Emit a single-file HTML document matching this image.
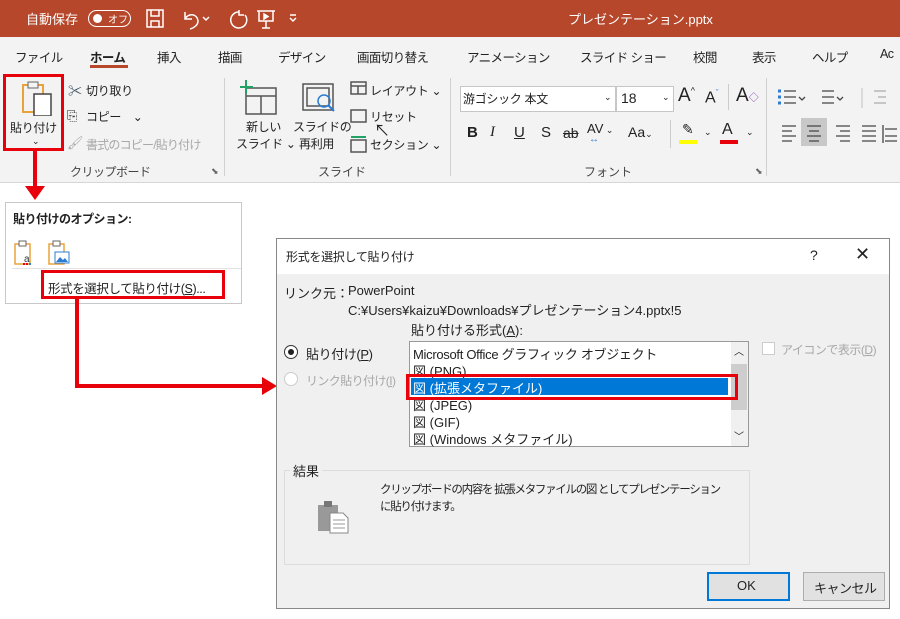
<!DOCTYPE html>
<html><head><meta charset="utf-8"><style>
*{margin:0;padding:0;box-sizing:border-box}
body{width:900px;height:619px;position:relative;background:#fff;overflow:hidden;font-family:"Liberation Sans","Noto Sans CJK JP",sans-serif;font-size:13px;color:#222}
.a{position:absolute;white-space:nowrap}
.g{color:#a8a8a8}
.t{top:47px;font-size:12.5px;letter-spacing:-0.6px}
.r{font-size:12px;letter-spacing:-0.3px}
</style></head><body>
<!-- title bar -->
<div class="a" style="left:0;top:0;width:900px;height:37px;background:#b7472a"></div>
<div class="a" style="left:26px;top:9px;color:#fff;font-size:13px">自動保存</div>
<div class="a" style="left:88px;top:10px;width:43px;height:17px;border:1.5px solid #fff;border-radius:9px"></div>
<div class="a" style="left:93px;top:14px;width:9px;height:9px;background:#fff;border-radius:50%"></div>
<div class="a" style="left:108px;top:11px;color:#fff;font-size:10px">オフ</div>
<svg class="a" style="left:145px;top:8px" width="160" height="22" fill="none" stroke="#fff" stroke-width="1.5">
<rect x="2" y="2" width="16" height="17"/><path d="M6 2v6h8V2M6 19v-6h8v6"/>
<path d="M40 4v7h7M40 11c3-6 12-6 13 2c0 4-4 7-8 8"/><path d="M58 9l3 3 3-3"/>
<path d="M94 4a8 8 0 1 0 6 3M94 2v5h5"/>
<path d="M112 3h18M114 3v10h14V3M121 13v7M117 20h8"/><path d="M119 6l4 2.5-4 2.5z" fill="#fff"/>
<path d="M145 10l3 3 3-3M145 7h6"/>
</svg>
<div class="a" style="left:568px;top:9px;color:#fff;font-size:13px">プレゼンテーション.pptx</div>
<!-- tabs & ribbon -->
<div class="a" style="left:0;top:37px;width:900px;height:146px;background:#f3f3f3;border-bottom:1px solid #d6d6d6"></div>
<div class="a t" style="left:15px">ファイル</div>
<div class="a t" style="left:90px;font-weight:bold">ホーム</div>
<div class="a" style="left:90px;top:65px;width:38px;height:3px;background:#b7472a"></div>
<div class="a t" style="left:157px">挿入</div>
<div class="a t" style="left:218px">描画</div>
<div class="a t" style="left:278px">デザイン</div>
<div class="a t" style="left:357px">画面切り替え</div>
<div class="a t" style="left:467px">アニメーション</div>
<div class="a t" style="left:580px">スライド ショー</div>
<div class="a t" style="left:693px">校閲</div>
<div class="a t" style="left:752px">表示</div>
<div class="a t" style="left:812px">ヘルプ</div>
<div class="a t" style="left:880px">Ac</div>
<!-- clipboard group -->
<svg class="a" style="left:20px;top:80px" width="36" height="36" fill="none">
<rect x="3" y="5" width="20" height="27" stroke="#e8a33d" stroke-width="2"/><rect x="8" y="2" width="10" height="6" fill="#f3f3f3" stroke="#666"/>
<rect x="14" y="14" width="17" height="22" fill="#fff" stroke="#444" stroke-width="1.5"/></svg>
<div class="a r" style="left:10px;top:119px">貼り付け</div>
<div class="a" style="left:32px;top:136px;font-size:9px">⌄</div>
<div class="a" style="left:3px;top:74px;width:61px;height:77px;border:3px solid #e8000b"></div>
<div class="a" style="left:68px;top:81px;font-size:14px;color:#456">✂</div>
<div class="a r" style="left:86px;top:82px">切り取り</div>
<div class="a" style="left:67px;top:108px;font-size:13px">⎘</div>
<div class="a r" style="left:86px;top:108px">コピー　⌄</div>
<div class="a g" style="left:67px;top:135px;font-size:13px">🖌</div>
<div class="a g r" style="left:86px;top:136px;letter-spacing:-0.8px">書式のコピー/貼り付け</div>
<div class="a" style="left:70px;top:163px;font-size:12px;color:#444;letter-spacing:-0.5px">クリップボード</div>
<div class="a" style="left:211px;top:166px;font-size:9px;color:#666">⬊</div>
<div class="a" style="left:224px;top:78px;width:1px;height:98px;background:#d0d0d0"></div>
<!-- slides group -->
<svg class="a" style="left:240px;top:80px" width="200" height="75" fill="none" stroke="#555" stroke-width="1.5">
<rect x="6" y="8" width="30" height="26"/><path d="M6 16h30M21 16v18"/><path d="M6 0v14M0 7h13" stroke="#21a366" stroke-width="2"/>
<rect x="63" y="4" width="30" height="26"/><rect x="67" y="8" width="22" height="18"/><circle cx="84" cy="21" r="6" stroke="#2b7cd3"/><path d="M88 25l6 6" stroke="#2b7cd3" stroke-width="2"/>
<rect x="111" y="2" width="15" height="12"/><path d="M111 6h15M118 6v8"/>
<rect x="111" y="30" width="15" height="12"/>
<rect x="111" y="60" width="15" height="12"/><path d="M111 57h15" stroke="#21a366" stroke-width="2"/>
</svg>
<div class="a r" style="left:370px;top:82px">レイアウト ⌄</div>
<div class="a r" style="left:370px;top:108px">リセット</div>
<div class="a" style="left:374px;top:117px;font-size:16px">↖</div>
<div class="a r" style="left:370px;top:136px">セクション ⌄</div>
<div class="a r" style="left:246px;top:118px">新しい</div>
<div class="a r" style="left:236px;top:135px">スライド ⌄</div>
<div class="a r" style="left:293px;top:118px">スライドの</div>
<div class="a r" style="left:299px;top:135px">再利用</div>
<div class="a" style="left:318px;top:163px;font-size:12px;color:#444">スライド</div>
<div class="a" style="left:450px;top:78px;width:1px;height:98px;background:#d0d0d0"></div>
<!-- font group -->
<div class="a" style="left:460px;top:86px;width:156px;height:26px;background:#fff;border:1px solid #c6c6c6"></div>
<div class="a r" style="left:463px;top:90px">游ゴシック 本文</div>
<div class="a" style="left:604px;top:92px;font-size:9px">⌄</div>
<div class="a" style="left:616px;top:86px;width:58px;height:26px;background:#fff;border:1px solid #c6c6c6"></div>
<div class="a" style="left:621px;top:90px;font-size:14px">18</div>
<div class="a" style="left:662px;top:92px;font-size:9px">⌄</div>
<div class="a" style="left:678px;top:85px;font-size:19px">A<sup style="font-size:9px">^</sup></div>
<div class="a" style="left:705px;top:88px;font-size:16px">A<sup style="font-size:9px;color:#2b7cd3">ˇ</sup></div>
<div class="a" style="left:728px;top:84px;width:1px;height:26px;background:#ccc"></div>
<div class="a" style="left:736px;top:85px;font-size:19px">A<span style="font-size:10px;color:#8a3ab9">◇</span></div>
<div class="a" style="left:467px;top:124px;font-size:15px;font-weight:bold">B</div>
<div class="a" style="left:490px;top:124px;font-size:15px;font-style:italic;font-family:'Liberation Serif'">I</div>
<div class="a" style="left:514px;top:124px;font-size:15px;text-decoration:underline">U</div>
<div class="a" style="left:541px;top:124px;font-size:15px">S</div>
<div class="a" style="left:563px;top:125px;font-size:14px;text-decoration:line-through">ab</div>
<div class="a" style="left:587px;top:121px;font-size:13px">AV<span style="font-size:9px"> ⌄</span></div>
<div class="a" style="left:589px;top:134px;font-size:10px;color:#2b7cd3">↔</div>
<div class="a" style="left:628px;top:124px;font-size:14px">Aa<span style="font-size:9px">⌄</span></div>
<div class="a" style="left:670px;top:120px;width:1px;height:28px;background:#ccc"></div>
<div class="a" style="left:682px;top:121px;font-size:14px">✎</div>
<div class="a" style="left:679px;top:140px;width:18px;height:4px;background:#ffff00"></div>
<div class="a" style="left:704px;top:127px;font-size:9px">⌄</div>
<div class="a" style="left:722px;top:121px;font-size:16px">A</div>
<div class="a" style="left:720px;top:140px;width:18px;height:4px;background:#e8000b"></div>
<div class="a" style="left:746px;top:127px;font-size:9px">⌄</div>
<div class="a" style="left:584px;top:163px;font-size:12px;color:#444">フォント</div>
<div class="a" style="left:755px;top:166px;font-size:9px;color:#666">⬊</div>
<div class="a" style="left:766px;top:78px;width:1px;height:98px;background:#d0d0d0"></div>
<!-- paragraph -->
<svg class="a" style="left:778px;top:88px" width="122" height="60" fill="none" stroke="#444" stroke-width="1.3">
<path d="M6 3h12M6 9h12M6 15h12"/><path d="M0 3h3M0 9h3M0 15h3" stroke="#2b7cd3" stroke-width="3"/>
<path d="M21 9l3 3 3-3"/><path d="M44 3h12M44 9h12M44 15h12M59 9l3 3 3-3"/>
<path d="M84 0v20" stroke="#ccc"/><path d="M96 3h12M100 9h8M96 15h12" stroke="#aaa"/>
<rect x="23" y="30" width="26" height="28" fill="#c8c8c8" stroke="none"/>
<path d="M4 38h14M4 43h10M4 48h14M4 53h10M29 38h14M31 43h10M29 48h14M31 53h10M58 38h14M62 43h10M58 48h14M62 53h10M84 38h14M84 43h14M84 48h14M84 53h14M105 37v18M107 41h12M107 48h12M107 53h12"/>
</svg>
<!-- arrow down -->
<div class="a" style="left:33px;top:151px;width:4px;height:38px;background:#e8000b"></div>
<svg class="a" style="left:25px;top:186px" width="20" height="16"><path d="M0 0h20L10 14z" fill="#e8000b"/></svg>
<!-- paste options panel -->
<div class="a" style="left:5px;top:202px;width:237px;height:102px;border:1px solid #c8c8c8;background:#fff"></div>
<div class="a" style="left:13px;top:210px;font-size:12px;font-weight:bold;letter-spacing:-0.5px">貼り付けのオプション:</div>
<svg class="a" style="left:13px;top:240px" width="60" height="26" fill="none">
<rect x="2" y="4" width="15" height="20" stroke="#e8a33d" stroke-width="1.5"/><rect x="6" y="1" width="7" height="5" fill="#fff" stroke="#666"/>
<text x="11" y="22" font-size="10" fill="#333" stroke="none" font-family="Liberation Sans">a</text>
<path d="M10 24h2M13 24h2" stroke="#e8000b" stroke-width="2"/><path d="M16 24h2" stroke="#2b7cd3" stroke-width="2"/>
<rect x="36" y="4" width="15" height="20" stroke="#e8a33d" stroke-width="1.5"/><rect x="40" y="1" width="7" height="5" fill="#fff" stroke="#666"/>
<rect x="42" y="12" width="14" height="11" fill="#fff" stroke="#2b7cd3"/><path d="M43 22l4-5 3 3 2-2 3 4z" fill="#2b7cd3"/>
</svg>
<div class="a" style="left:12px;top:268px;width:229px;height:1px;background:#e2e2e2"></div>
<div class="a" style="left:48px;top:278px;font-size:12.5px;letter-spacing:-0.4px">形式を選択して貼り付け(<u>S</u>)...</div>
<div class="a" style="left:41px;top:270px;width:184px;height:29px;border:3px solid #e8000b"></div>
<!-- red connector -->
<div class="a" style="left:75px;top:298px;width:4px;height:90px;background:#e8000b"></div>
<div class="a" style="left:75px;top:384px;width:190px;height:4px;background:#e8000b"></div>
<svg class="a" style="left:262px;top:377px" width="16" height="18"><path d="M0 0L15 9L0 18z" fill="#e8000b"/></svg>
<!-- dialog -->
<div class="a" style="left:276px;top:238px;width:614px;height:371px;background:#f0f0f0;border:1px solid #888"></div>
<div class="a" style="left:277px;top:239px;width:612px;height:35px;background:#fff"></div>
<div class="a" style="left:286px;top:248px;font-size:12px;letter-spacing:-0.3px">形式を選択して貼り付け</div>
<div class="a" style="left:810px;top:247px;font-size:14px">?</div>
<div class="a" style="left:855px;top:244px;font-size:18px;font-weight:300">✕</div>
<div class="a" style="left:284px;top:283px;font-size:13px">リンク元：</div>
<div class="a" style="left:348px;top:283px;font-size:13px">PowerPoint</div>
<div class="a" style="left:348px;top:300px;font-size:13px">C:¥Users¥kaizu¥Downloads¥プレゼンテーション4.pptx!5</div>
<div class="a" style="left:411px;top:320px;font-size:13px">貼り付ける形式(<u>A</u>):</div>
<div class="a" style="left:284px;top:345px;width:14px;height:14px;border:1px solid #333;border-radius:50%;background:#fff"></div>
<div class="a" style="left:288px;top:349px;width:6px;height:6px;border-radius:50%;background:#222"></div>
<div class="a" style="left:306px;top:344px;font-size:13px;letter-spacing:-0.4px">貼り付け(<u>P</u>)</div>
<div class="a" style="left:284px;top:372px;width:14px;height:14px;border:1px solid #ccc;border-radius:50%;background:#fff"></div>
<div class="a g" style="left:306px;top:372px;font-size:12px;letter-spacing:-0.6px">リンク貼り付け(<u>I</u>)</div>
<!-- listbox -->
<div class="a" style="left:409px;top:341px;width:340px;height:106px;background:#fff;border:1px solid #999"></div>
<div class="a" style="left:413px;top:344px;font-size:13px;letter-spacing:-0.3px">Microsoft Office グラフィック オブジェクト</div>
<div class="a" style="left:413px;top:361px;font-size:13px">図 (PNG)</div>
<div class="a" style="left:411px;top:378px;width:317px;height:17px;background:#0078d7"></div>
<div class="a" style="left:413px;top:378px;font-size:13px;color:#fff">図 (拡張メタファイル)</div>
<div class="a" style="left:413px;top:395px;font-size:13px">図 (JPEG)</div>
<div class="a" style="left:413px;top:412px;font-size:13px">図 (GIF)</div>
<div class="a" style="left:413px;top:429px;font-size:13px">図 (Windows メタファイル)</div>
<div class="a" style="left:731px;top:342px;width:17px;height:104px;background:#f0f0f0"></div>
<div class="a" style="left:731px;top:364px;width:16px;height:46px;background:#cdcdcd"></div>
<div class="a" style="left:734px;top:343px;font-size:10px">︿</div>
<div class="a" style="left:734px;top:428px;font-size:10px">﹀</div>
<div class="a" style="left:406px;top:374px;width:332px;height:26px;border:3px solid #e8000b"></div>
<div class="a" style="left:762px;top:342px;width:13px;height:13px;border:1px solid #ccc;background:#fff"></div>
<div class="a g" style="left:781px;top:341px;font-size:12px;letter-spacing:-0.5px">アイコンで表示(<u>D</u>)</div>
<!-- result group -->
<div class="a" style="left:284px;top:470px;width:466px;height:95px;border:1px solid #dcdcdc"></div>
<div class="a" style="left:290px;top:461px;font-size:13px;background:#f0f0f0;padding:0 3px">結果</div>
<svg class="a" style="left:316px;top:500px" width="36" height="34">
<rect x="2" y="5" width="20" height="26" fill="#999"/><rect x="8" y="1" width="8" height="6" fill="#777"/>
<path d="M14 13h13l5 5v15H14z" fill="#fff" stroke="#888"/><path d="M17 20h12M17 24h12M17 28h12" stroke="#999"/></svg>
<div class="a" style="left:380px;top:481px;font-size:11.5px;letter-spacing:-1.3px">クリップボードの内容を 拡張メタファイルの図 としてプレゼンテーション</div>
<div class="a" style="left:380px;top:498px;font-size:11.5px;letter-spacing:-1.3px">に貼り付けます。</div>
<div class="a" style="left:707px;top:572px;width:83px;height:29px;background:#e1e1e1;border:2px solid #0078d7"></div>
<div class="a" style="left:737px;top:578px;font-size:13px">OK</div>
<div class="a" style="left:803px;top:572px;width:82px;height:29px;background:#e1e1e1;border:1px solid #adadad"></div>
<div class="a" style="left:814px;top:578px;font-size:13px;letter-spacing:-0.5px">キャンセル</div>
</body></html>
